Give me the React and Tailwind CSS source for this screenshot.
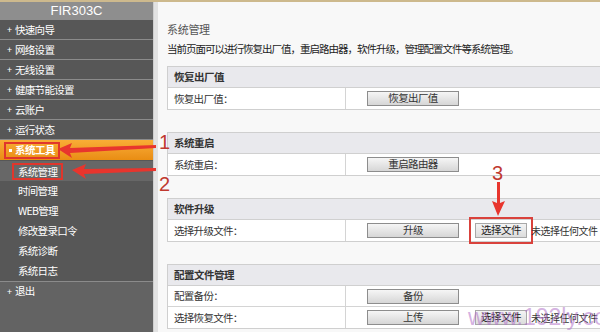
import React from 'react';

const cjk = { fontFamily: '"Noto Sans CJK SC", "Liberation Sans", sans-serif' };
const latin = { fontFamily: '"Liberation Sans", sans-serif' };

const topItems = ['快速向导', '网络设置', '无线设置', '健康节能设置', '云账户', '运行状态'];
const subItems = ['系统管理', '时间管理', 'WEB管理', '修改登录口令', '系统诊断', '系统日志'];

function MenuItem({ label }) {
    return (
        <div className="h-[20px] flex items-center pl-[7px] text-white text-[10.5px] tracking-[-0.7px] border-b border-[#8b8b8b] bg-[#575757]">
            <span className="w-[8px] text-[9px] leading-none">+</span>
            <span>{label}</span>
        </div>
    );
}

function Btn({ children }) {
    return (
        <div className="w-[92px] h-[15px] flex items-center justify-center border border-[#8d8d8d] bg-gradient-to-b from-[#f6f6f6] to-[#d6d6d6] text-[10.5px] tracking-[-0.6px] text-[#333] leading-none">
            {children}
        </div>
    );
}

function FileBtn({ outline }) {
    return (
        <div className="flex items-center">
            <div className={`h-[15px] px-[5px] flex items-center border border-[#a8a8a8] bg-gradient-to-b from-[#f4f4f4] to-[#dcdcdc] text-[10.5px] tracking-[-0.5px] text-[#222] leading-none ${outline ? 'outline-2 outline-[#d9423c] outline-offset-[4px]' : ''}`}>
                选择文件
            </div>
            <span className="ml-[4px] text-[10px] tracking-[-0.5px] text-[#333] whitespace-nowrap">未选择任何文件</span>
        </div>
    );
}

function Row({ label, children, last }) {
    return (
        <div className={`flex h-[21px] bg-white ${last ? '' : 'border-b border-[#d4d4d4]'}`}>
            <div className="w-[178px] pl-[6px] flex items-center text-[10.5px] tracking-[-0.7px] text-[#333] border-r border-[#d4d4d4]">{label}</div>
            <div className="flex items-center pl-[21px] gap-[16px]">{children}</div>
        </div>
    );
}

function Panel({ title, children }) {
    return (
        <div className="w-[460px] border border-[#cfcfcf]">
            <div className="h-[21px] flex items-center pl-[6px] bg-[#e9e9ed] border-b border-[#d0d0d0] text-[10.5px] tracking-[-0.5px] font-bold text-[#333]">{title}</div>
            {children}
        </div>
    );
}

export default function App() {
    return (
        <div className="relative w-[600px] h-[332px] overflow-hidden bg-[#f8f8f8] border-t-2 border-[#cdb98d]" style={cjk}>
            <div className="flex h-full">
                {/* sidebar */}
                <div className="w-[153px] flex flex-col bg-[#636363]">
                    <div className="h-[18px] flex items-center justify-center bg-[#8e8e8e] text-white text-[13px]" style={latin}>FIR303C</div>
                    {topItems.map((t) => (
                        <MenuItem key={t} label={t} />
                    ))}
                    <div className="h-[20px] flex items-center bg-gradient-to-b from-[#f9ad35] to-[#e98d12]">
                        <div className="ml-[4px] h-[17px] px-[3px] flex items-center border-2 border-[#e0362c] text-white text-[10.5px] tracking-[-0.5px] font-bold">
                            <span className="w-[3px] h-[3px] bg-white mr-[3px]"></span>
                            系统工具
                        </div>
                    </div>
                    <div className="bg-[#575757] pt-[1px] border-b border-[#8b8b8b]">
                        {subItems.map((t, i) => (
                            <div key={t} className={`h-[20px] flex items-center pl-[12px] text-white text-[10.5px] tracking-[-0.7px] ${i === 0 ? 'bg-[#676767]' : ''}`}>
                                <span className={i === 0 ? 'px-[4px] border-2 border-[#e0362c] leading-[13px]' : 'pl-[6px]'}>{t}</span>
                            </div>
                        ))}
                    </div>
                    <div className="h-[18px] flex items-center pl-[7px] text-white text-[10.5px] tracking-[-0.7px]">
                        <span className="w-[8px] text-[9px] leading-none">+</span>
                        <span>退出</span>
                    </div>
                </div>
                <div className="w-[5px] bg-[#e2e2e2] border-l border-[#cfcfcf]"></div>

                {/* main */}
                <div className="flex-1 pl-[9px] pt-[18px] overflow-hidden">
                    <div className="text-[11px] tracking-[-0.3px] text-[#555] h-[18px] leading-[18px]">系统管理</div>
                    <div className="mt-[2px] text-[10.5px] tracking-[-1px] text-[#222] h-[18px] leading-[18px] whitespace-nowrap">当前页面可以进行恢复出厂值，重启路由器，软件升级，管理配置文件等系统管理。</div>
                    <div className="mt-[8px] flex flex-col gap-[22px]">
                        <Panel title="恢复出厂值">
                            <Row label="恢复出厂值：" last><Btn>恢复出厂值</Btn></Row>
                        </Panel>
                        <Panel title="系统重启">
                            <Row label="系统重启：" last><Btn>重启路由器</Btn></Row>
                        </Panel>
                        <Panel title="软件升级">
                            <Row label="选择升级文件：" last><Btn>升级</Btn><FileBtn outline /></Row>
                        </Panel>
                        <Panel title="配置文件管理">
                            <Row label="配置备份："><Btn>备份</Btn></Row>
                            <Row label="选择恢复文件：" last><Btn>上传</Btn><FileBtn /></Row>
                        </Panel>
                    </div>
                </div>
            </div>

            {/* annotations */}
            <svg className="absolute inset-0 pointer-events-none" width="600" height="332">
                <polygon points="58,147 72,141 70,146 156,143 156,146 70,151 72,156" fill="#e8352d" />
                <polygon points="72,168 86,162 84,167 156,166 156,169 84,172 86,177" fill="#e8352d" />
                <polygon points="498,214 492,199 497,201 497,180 500,180 500,201 505,199" fill="#e8352d" />
            </svg>
            <span className="absolute left-[159px] top-[130px] text-[20px] leading-none text-[#c0392f]" style={latin}>1</span>
            <span className="absolute left-[159px] top-[172px] text-[20px] leading-none text-[#c0392f]" style={latin}>2</span>
            <span className="absolute left-[492px] top-[161px] text-[20px] leading-none text-[#c0392f]" style={latin}>3</span>
            <span className="absolute left-[468px] top-[304px] text-[23px] leading-none text-[#b070c8]/55" style={latin}>www.192ly.com</span>
        </div>
    );
}
